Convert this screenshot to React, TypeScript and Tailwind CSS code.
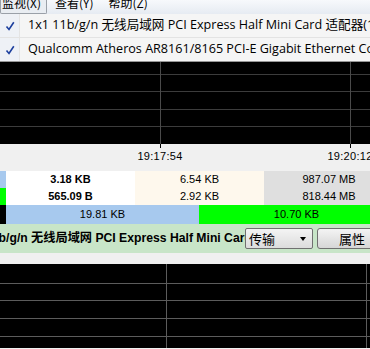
import React from 'react';

const topLinesY = [12.5, 29.5, 47.5, 64.5];
const bottomLinesY = [19.5, 36.5, 54.5, 72.5];

function Check() {
  return (
    <svg width="10" height="10" viewBox="0 0 10 10" aria-hidden="true">
      <path d="M1.5 5.5 L4 8.5 L8.8 1.2" fill="none" stroke="#1c3f9e" strokeWidth="1.6" />
    </svg>
  );
}

function MenuRow({ label, last }: { label: string; last?: boolean }) {
  return (
    <div
      className={`flex ${last ? 'h-[23px]' : 'h-[24px] border-b border-[#e3e3e3]'} items-center overflow-hidden`}
    >
      <div className="flex h-full w-[20px] shrink-0 items-center justify-center border-r border-[#e4e4e4] bg-[#eef1f6]">
        <Check />
      </div>
      <span className="shrink-0 whitespace-nowrap pl-[8px] font-['Open_Sans','Noto_Sans_CJK_SC',sans-serif] text-[12.6px] text-black">
        {label}
      </span>
    </div>
  );
}

export default function App() {
  return (
    <div className="h-[349px] w-[370px] overflow-hidden bg-[#f0f0f0] font-['Liberation_Sans','Noto_Sans_CJK_SC',sans-serif]">
      <div className="w-[394px]">
        {/* menu bar, top cut off */}
        <div className="flex h-[14px] overflow-hidden bg-gradient-to-b from-[#f7f9fc] to-[#e6ebf2] font-['Noto_Sans_CJK_SC',sans-serif] text-[12px] text-black">
          <div className="h-[14px] w-[47px] rounded-b-[2px] border border-t-0 border-[#9aa0a8] bg-[#e9edf2]">
            <span className="-mt-[4px] block pl-[1px] leading-[14px]">监视(X)</span>
          </div>
          <span className="-mt-[4px] ml-[8px] block leading-[14px]">查看(Y)</span>
          <span className="-mt-[4px] ml-[15px] block leading-[14px]">帮助(Z)</span>
        </div>

        {/* dropdown */}
        <div className="border-b border-[#979797] bg-[#f5f5f5]">
          <MenuRow label="1x1 11b/g/n 无线局域网 PCI Express Half Mini Card 适配器(1)" />
          <MenuRow label="Qualcomm Atheros AR8161/8165 PCI-E Gigabit Ethernet Controller" last />
        </div>

        {/* upper graph */}
        <svg width="394" height="82" className="block bg-black">
          {topLinesY.map((y) => (
            <line key={y} x1="0" x2="394" y1={y} y2={y} stroke="#3c3c3c" />
          ))}
          <line x1="160.5" x2="160.5" y1="0" y2="82" stroke="#4a4a4a" />
          <line x1="350.5" x2="350.5" y1="0" y2="82" stroke="#4a4a4a" />
        </svg>

        {/* time axis */}
        <div className="relative h-[27px] text-[11px] tracking-[0.3px] text-black">
          <div className="absolute left-[160px] top-0 h-[4px] w-px bg-black" />
          <div className="absolute left-[350px] top-0 h-[4px] w-px bg-black" />
          <span className="absolute left-[160px] top-[6px] -translate-x-1/2 leading-[13px]">19:17:54</span>
          <span className="absolute left-[350px] top-[6px] -translate-x-1/2 leading-[13px]">19:20:12</span>
        </div>

        {/* totals */}
        <div className="grid grid-cols-[6px_129px_129px_130px] text-[11px] leading-[17px] text-black">
          <div className="h-[17px] bg-[#a7c9ee]" />
          <div className="bg-white text-center font-bold">3.18 KB</div>
          <div className="bg-[#fef8ed] text-center">6.54 KB</div>
          <div className="bg-[#dfdfdf] text-center">987.07 MB</div>
          <div className="h-[17px] bg-[#00ff00]" />
          <div className="bg-white text-center font-bold">565.09 B</div>
          <div className="bg-[#fef8ed] text-center">2.92 KB</div>
          <div className="bg-[#dfdfdf] text-center">818.44 MB</div>
        </div>

        {/* rate bar */}
        <div className="flex h-[19px] text-[11px] leading-[19px] text-black">
          <div className="w-[6px] bg-black" />
          <div className="w-[193px] bg-[#a7c9ee] text-center">19.81 KB</div>
          <div className="flex-1 bg-[#00ff00] text-center">10.70 KB</div>
        </div>

        {/* adapter row */}
        <div className="flex h-[29px] items-center bg-[#c8e5c8]">
          <div className="w-[245px] shrink-0 overflow-hidden whitespace-nowrap text-[12.2px] font-bold text-black">
            <span className="-ml-[38px] block">1x1 11b/g/n 无线局域网 PCI Express Half Mini Card 适配器</span>
          </div>
          <div className="flex h-[21px] w-[68px] shrink-0 items-center justify-between rounded-[2px] border border-[#707070] bg-gradient-to-b from-[#f4f4f4] to-[#dcdcdc] pl-[3px] pr-[6px] font-['Noto_Sans_CJK_SC',sans-serif] text-[13px] text-black">
            <span className="leading-[16px]">传输</span>
            <span className="h-0 w-0 border-x-[3.5px] border-t-[4px] border-x-transparent border-t-black" />
          </div>
          <div className="ml-[4px] flex h-[21px] w-[70px] shrink-0 items-center justify-center rounded-[3px] border border-[#707070] bg-gradient-to-b from-[#f4f4f4] to-[#d6d6d6] font-['Noto_Sans_CJK_SC',sans-serif] text-[13px] leading-[16px] text-black">
            属性
          </div>
        </div>

        <div className="h-[11px]" />

        {/* lower graph */}
        <svg width="394" height="84" className="block bg-black">
          {bottomLinesY.map((y) => (
            <line key={y} x1="0" x2="394" y1={y} y2={y} stroke="#5c5c5c" />
          ))}
          <line x1="166.5" x2="166.5" y1="0" y2="84" stroke="#5c5c5c" />
          <line x1="366.5" x2="366.5" y1="0" y2="84" stroke="#5c5c5c" />
        </svg>
      </div>
    </div>
  );
}
